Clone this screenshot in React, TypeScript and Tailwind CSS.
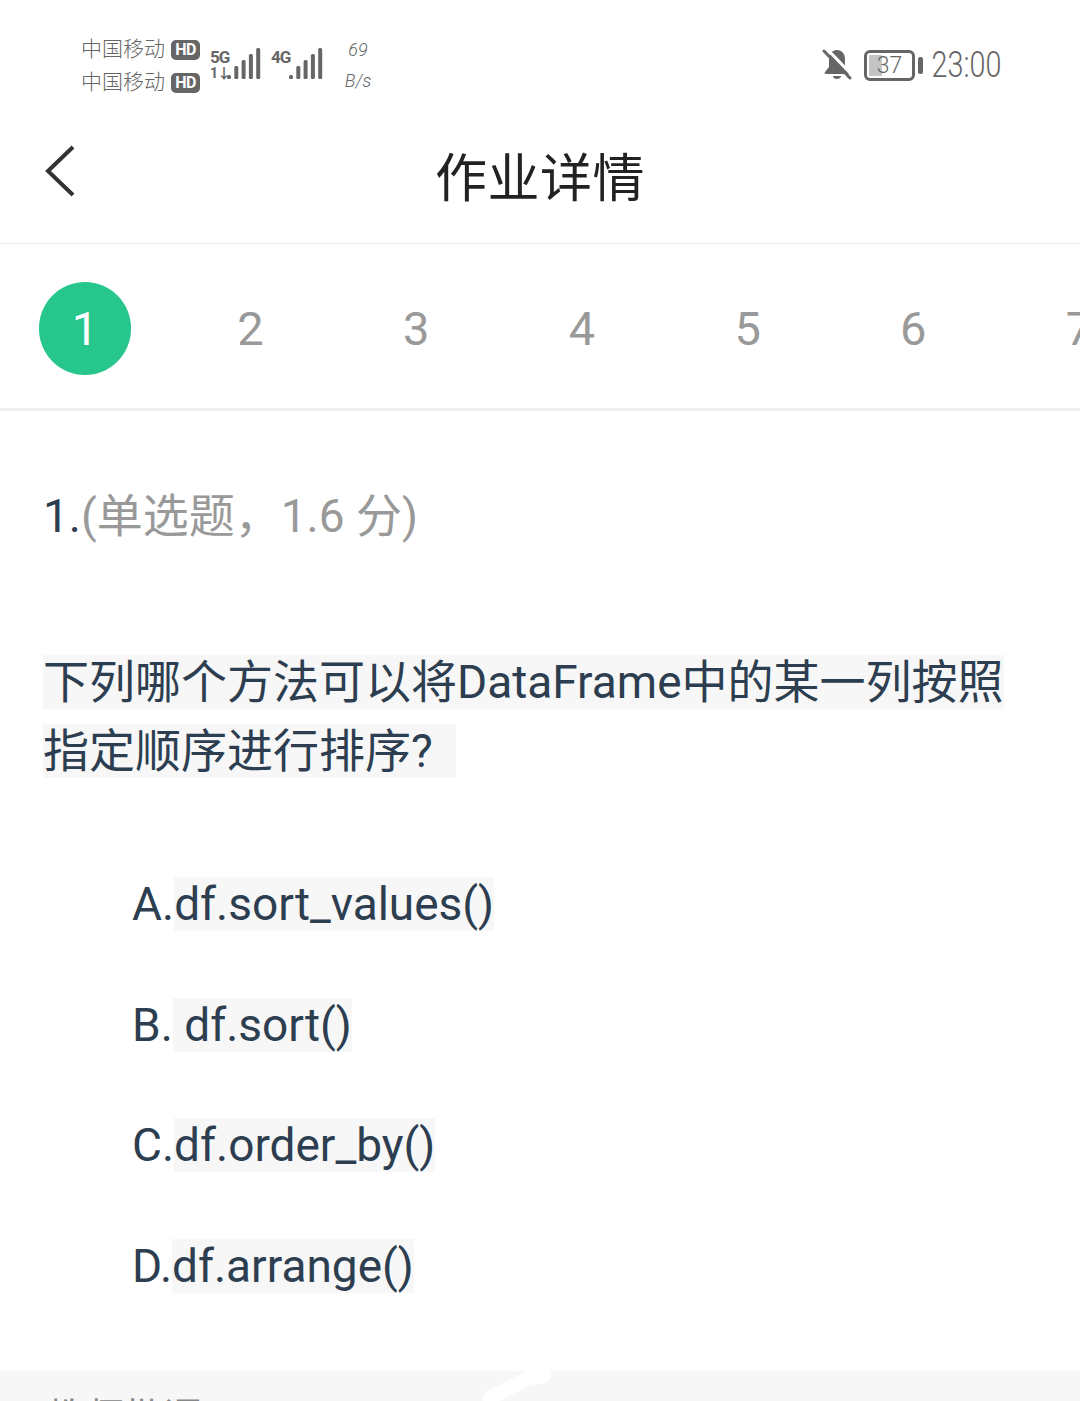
const TABS = [1, 2, 3, 4, 5, 6, 7]

const OPTIONS = [
  { label: 'A.', text: 'df.sort_values()' },
  { label: 'B.', text: ' df.sort()' },
  { label: 'C.', text: 'df.order_by()' },
  { label: 'D.', text: 'df.arrange()' },
]

const FONT = "font-['Roboto','Noto_Sans_CJK_SC',sans-serif]"

function Signal({ x }: { x: number }) {
  const bars = [4, 13, 19, 25, 31]
  return (
    <svg width="52" height="36" viewBox="0 0 52 36" className="block">
      {bars.map((h, i) => (
        <rect key={i} x={x + i * 7.3} y={32 - h} width="4" height={h} rx="1.5" fill="#666" />
      ))}
    </svg>
  )
}

function Hd() {
  return (
    <span className="flex h-[20px] w-[29px] items-center justify-center rounded-[5px] bg-[#666] text-[16px] font-bold leading-none tracking-[-0.5px] text-white">
      HD
    </span>
  )
}

function Bell() {
  return (
    <svg width="30" height="32" viewBox="0 0 30 32" className="mr-[12px]">
      <path d="M15 1c-5 0-8 4-8 9v8l-4 5c-1 1 0 2 1 2h22c1 0 2-1 1-2l-4-5v-8c0-5-3-9-8-9z" fill="#666" />
      <path d="M11 27h8c0 2-2 3-4 3s-4-1-4-3z" fill="#666" />
      <path d="M5 0 L30 26" stroke="#fff" strokeWidth="3" />
      <path d="M2 2 L28 29" stroke="#666" strokeWidth="3" strokeLinecap="round" />
    </svg>
  )
}

function StatusBar() {
  return (
    <div className="flex h-[120px] items-center justify-between pl-[81px] pr-[79px] pt-[10px] text-[#666]">
      <div className="flex items-center">
        <div className="flex w-[119px] flex-col gap-[12px] pt-[2px] text-[21px] font-light leading-[21px]">
          <div className="flex items-center gap-[6px]"><span className="w-[84px] whitespace-nowrap">中国移动</span><Hd /></div>
          <div className="flex items-center gap-[6px]"><span className="w-[84px] whitespace-nowrap">中国移动</span><Hd /></div>
        </div>
        <div className="relative ml-[10px] h-[36px] w-[61px]">
          <span className="absolute left-0 top-[2px] text-[17px] font-bold leading-[16px] tracking-[-1px]">5G</span>
          <span className="absolute left-0 top-[19px] text-[14px] font-bold leading-[14px] tracking-[-1px]">1↓</span>
          <div className="absolute left-0 top-0"><Signal x={17} /></div>
        </div>
        <div className="relative h-[36px] w-[52px]">
          <span className="absolute left-0 top-[2px] text-[17px] font-bold leading-[16px] tracking-[-1px]">4G</span>
          <div className="absolute left-0 top-0"><Signal x={18} /></div>
        </div>
        <div className="ml-[20px] flex w-[30px] flex-col items-center text-[18px] font-light italic leading-[31px]">
          <span>69</span>
          <span>B/s</span>
        </div>
      </div>
      <div className="flex items-center">
        <Bell />
        <div className="relative flex h-[31px] w-[51px] items-center rounded-[6px] border-[3px] border-[#666] p-[2px]">
          <div className="h-full w-[13px] rounded-[1px] bg-[#c4c4c4]" />
          <span className="absolute inset-0 flex items-center justify-center text-[23px] font-light leading-none">37</span>
        </div>
        <div className="ml-[3px] mr-[10px] h-[17px] w-[5px] rounded-[2px] bg-[#666]" />
        <div className="flex w-[68px] justify-end">
          <span className="origin-right scale-x-[.8] text-[36px] font-light leading-none">23:00</span>
        </div>
      </div>
    </div>
  )
}

function Header() {
  return (
    <div className="relative flex h-[124px] items-center justify-center border-b border-[#ececec] pb-[10px]">
      <svg width="34" height="54" viewBox="0 0 34 54" className="absolute left-[44px] top-[25px]">
        <path d="M29 2 L4 26 L29 50" fill="none" stroke="#333" strokeWidth="4" />
      </svg>
      <h1 className="pt-[6px] text-[52px] font-normal leading-none tracking-[0.5px] text-[#222]">作业详情</h1>
    </div>
  )
}

function Tabs() {
  return (
    <div className="flex h-[167px] items-center overflow-hidden border-b-[3px] border-[#f0f0f0] pl-[2px] pt-[5px]">
      {TABS.map(n => (
        <div key={n} className="flex h-[93px] w-[165.7px] shrink-0 items-center justify-center">
          <div className={`flex h-[93px] w-[92px] items-center justify-center rounded-full text-[47px] leading-none ${n === 1 ? 'bg-[#26c68d] text-white' : 'text-[#999]'}`}>
            {n}
          </div>
        </div>
      ))}
    </div>
  )
}

export default function App() {
  return (
    <div className={`flex h-[1401px] w-[1080px] flex-col overflow-hidden bg-white antialiased ${FONT}`}>
      <StatusBar />
      <Header />
      <Tabs />
      <main className="flex-1 px-[43px] pt-[76px] text-[46px] text-[#2c3e50]">
        <p className="leading-[58px]">
          1.<span className="text-[#999]">(单选题，1.6 分)</span>
        </p>
        <p className="mt-[103px] w-[970px] text-[46px] leading-[69px]">
          <span className="bg-[#f7f7f7]">下列哪个方法可以将DataFrame中的某一列按照指定顺序进行排序?&nbsp;&nbsp;</span>
        </p>
        <ul className="mt-[90px] flex flex-col gap-[64.67px] pl-[89px]">
          {OPTIONS.map(o => (
            <li key={o.label} className="whitespace-pre leading-[56px]">
              {o.label}<span className="bg-[#f7f7f7]">{o.text}</span>
            </li>
          ))}
        </ul>
      </main>
      <div className="relative h-[30px] overflow-hidden bg-[#f7f7f7] pl-[46px] pt-[24px] text-[39px] leading-[46px] text-[#888]">
        教师批语
        <svg width="90" height="34" viewBox="0 0 90 34" className="absolute left-[478px] top-0">
          <path d="M12 27 L50 7 L66 5" fill="none" stroke="#fff" strokeWidth="14" strokeLinecap="round" />
        </svg>
      </div>
    </div>
  )
}
